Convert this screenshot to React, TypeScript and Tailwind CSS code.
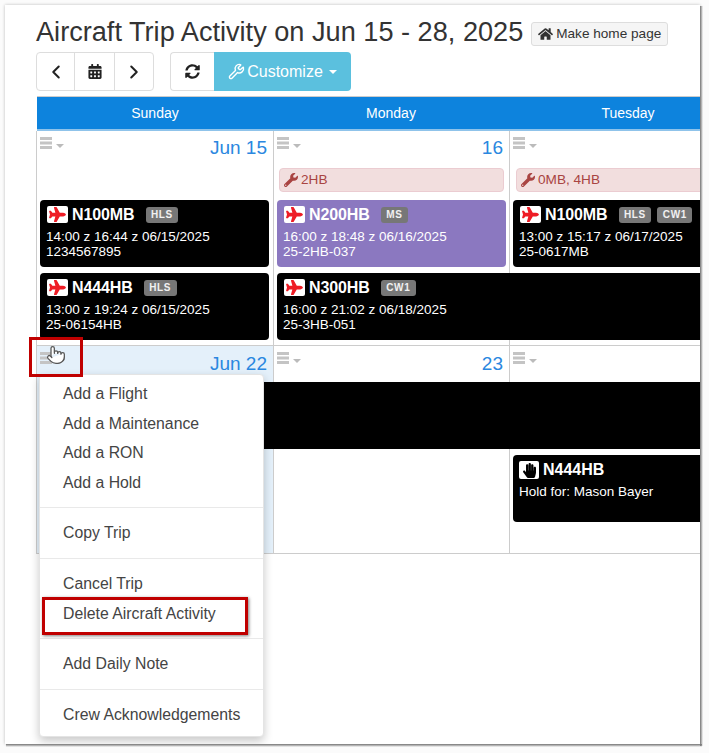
import React from "react";
import { FaCalendarAlt, FaHandPaper, FaHome, FaPlane, FaSyncAlt, FaWrench } from "react-icons/fa";
import { ChevronLeft, ChevronRight, Pointer, Wrench } from "lucide-react";

const Caret = ({ c }: { c: string }) => (
  <span className={`inline-block w-0 h-0 border-x-[4px] border-t-[4px] border-x-transparent ${c}`} />
);

const Bars = () => (
  <svg width="12" height="12" viewBox="0 0 12 12" fill="#c4c4c4">
    <rect x="0" y="0" width="12" height="3" />
    <rect x="0" y="4.5" width="12" height="3" />
    <rect x="0" y="9" width="12" height="3" />
  </svg>
);

const DayHead = ({ label, col, low = false }: { label: string; col: string; low?: boolean }) => (
  <div className={`${col} row-start-1 flex justify-between pl-[4px] pr-[6px] pt-[6px]`}>
    <span className="flex items-start">
      <Bars />
      <span className="ml-[4px] mt-[7px] flex"><Caret c="border-t-[#bbb]" /></span>
    </span>
    <span className={`text-[19px] leading-[24px] text-[#2a87e0] ${low ? "mt-0" : "-mt-[1px]"}`}>{label}</span>
  </div>
);

const Badge = ({ t }: { t: string }) => (
  <span className="h-[16px] px-[5.5px] ml-[2px] rounded-[3px] bg-[#777] text-white/90 text-[10px] font-bold tracking-[0.6px] leading-[16px]">{t}</span>
);

const Card = ({ name, badges = [], l1, l2, className = "", purple = false }: { name: string; badges?: string[]; l1: string; l2: string; className?: string; purple?: boolean }) => (
  <div className={`h-[67px] rounded-[4px] text-white pl-[6px] pt-[6px] overflow-hidden ${purple ? "bg-[#8b78c0]" : "bg-black"} ${className}`}>
    <div className="flex items-center h-[17px]">
      <span className="ml-[1px] w-[21px] h-[17px] bg-white rounded-[2px] flex items-center justify-center text-[#ee1c25]">
        <FaPlane className="w-[17px] h-[15px]" />
      </span>
      <span className="ml-[4px] mr-[9px] text-[16px] font-bold leading-[17px] tracking-[-0.1px]">{name}</span>
      <span className="flex gap-[4px]">{badges.map((b) => <Badge key={b} t={b} />)}</span>
    </div>
    <div className="mt-[6px] text-[13.5px] leading-[15px]">{l1}</div>
    <div className="text-[13.5px] leading-[15px]">{l2}</div>
  </div>
);

const Alert = ({ t, className = "" }: { t: string; className?: string }) => (
  <div className={`row-start-2 self-start h-[24px] rounded-[4px] bg-[#f2dede] border border-[#ebccd1] text-[#a94442] text-[13.6px] flex items-center pl-[4px] gap-[3px] ${className}`}>
    <FaWrench className="w-[14px] h-[14px]" />
    {t}
  </div>
);

const Item = ({ t }: { t: string }) => <div className="h-[29.6px] pl-[23px] text-[15.8px] leading-[29.6px] text-[#444]">{t}</div>;
const Divider = () => <div className="h-px bg-[#e9e9e9] my-[10px]" />;

const ColLines = () => (
  <>
    <div className="col-start-1 row-start-1 row-span-full border-l border-[#ccc]" />
    <div className="col-start-2 row-start-1 row-span-full border-l border-[#ccc]" />
    <div className="col-start-3 row-start-1 row-span-full border-l border-[#ccc]" />
  </>
);

export default function App() {
  return (
    <div className="relative w-[709px] h-[753px] overflow-hidden bg-[#fbfbfb]" style={{ fontFamily: '"Liberation Sans", Arial, sans-serif' }}>
      <div className="relative ml-[5px] mt-[5px] w-[695px] h-[739px] bg-white overflow-hidden shadow-[0_0_3px_rgba(0,0,0,0.25)]">
        <div className="pl-[31px] text-[#333]">
          <div className="flex items-center h-[47px]">
            <h1 className="text-[27.15px] leading-[32px] text-[#333] whitespace-nowrap mt-[6px]">Aircraft Trip Activity on Jun 15 - 28, 2025</h1>
            <span className="ml-[8px] mt-[11px] h-[24px] w-[137px] flex items-center justify-center gap-[3px] rounded-[3px] bg-[#f5f5f5] border border-[#ddd] text-[13.6px] whitespace-nowrap">
              <FaHome className="w-[15px] h-[14px]" />Make home page
            </span>
          </div>
          <div className="flex h-[39px] text-[#333]">
            <div className="flex w-[118px] border border-[#ddd] rounded-[4px] text-[#222]">
              <span className="w-[37px] flex items-center justify-center"><ChevronLeft className="w-[22px] h-[22px]" strokeWidth={2.2} /></span>
              <span className="w-[41px] flex items-center justify-center border-x border-[#ddd]"><FaCalendarAlt className="w-[14px] h-[15px]" /></span>
              <span className="flex-1 flex items-center justify-center"><ChevronRight className="w-[22px] h-[22px]" strokeWidth={2.2} /></span>
            </div>
            <div className="flex ml-[16px]">
              <span className="w-[44px] flex items-center justify-center border border-r-0 border-[#ddd] rounded-l-[4px] text-[#222]"><FaSyncAlt className="w-[15px] h-[15px]" /></span>
              <span className="w-[137px] flex items-center justify-center gap-[2px] bg-[#5bc0de] rounded-r-[4px] text-white text-[16px]">
                <Wrench className="w-[17px] h-[17px]" strokeWidth={2} />Customize
                <span className="ml-[4px] flex"><Caret c="border-t-white" /></span>
              </span>
            </div>
          </div>
          <div className="mt-[5px] border-t border-[#ccc] w-[664px] ml-[1px] h-[35px] bg-[#0d83dd] border-b-2 border-b-[#8fc3ea] text-white text-[14px] grid grid-cols-[236px_236px_238px] items-center text-center">
            <span>Sunday</span><span>Monday</span><span>Tuesday</span>
          </div>

          <div className="grid grid-cols-[237px_236px_236px_236px] grid-rows-[37px_32px_73px_72px] border-b border-[#ccc] w-[945px]">
            <ColLines />
            <DayHead label="Jun 15" col="col-start-1" />
            <DayHead label="16" col="col-start-2" />
            <DayHead label="" col="col-start-3" />
            <Alert t="2HB" className="col-start-2 ml-[6px] mr-[5px]" />
            <Alert t="0MB, 4HB" className="col-start-3 col-span-2 ml-[7px]" />
            <Card className="col-start-1 row-start-3 ml-[4px] mr-[4px]" name="N100MB" badges={["HLS"]} l1="14:00 z 16:44 z 06/15/2025" l2="1234567895" />
            <Card purple className="col-start-2 row-start-3 ml-[4px] mr-[3px]" name="N200HB" badges={["MS"]} l1="16:00 z 18:48 z 06/16/2025" l2="25-2HB-037" />
            <Card className="col-start-3 row-start-3 ml-[4px]" name="N100MB" badges={["HLS", "CW1"]} l1="13:00 z 15:17 z 06/17/2025" l2="25-0617MB" />
            <Card className="col-start-1 row-start-4 ml-[4px] mr-[4px]" name="N444HB" badges={["HLS"]} l1="13:00 z 19:24 z 06/15/2025" l2="25-06154HB" />
            <Card className="col-start-2 col-span-3 row-start-4 ml-[4px]" name="N300HB" badges={["CW1"]} l1="16:00 z 21:02 z 06/18/2025" l2="25-3HB-051" />
          </div>

          <div className="grid grid-cols-[237px_236px_236px_236px] grid-rows-[36px_73px_98px] border-b border-[#ccc] w-[945px]">
            <div className="col-start-1 row-start-1 row-span-full bg-[#e4f0fa]" />
            <ColLines />
            <DayHead low label="Jun 22" col="col-start-1" />
            <DayHead low label="23" col="col-start-2" />
            <DayHead low label="" col="col-start-3" />
            <div className="col-start-1 col-span-4 row-start-2 h-[67px] ml-[4px] bg-black rounded-l-[4px]" />
            <div className="col-start-3 row-start-3 ml-[4px] h-[67px] bg-black rounded-[4px] text-white pl-[6px] pt-[5px]">
              <div className="flex items-center h-[20px]">
                <span className="w-[20px] h-[18px] bg-white rounded-[2px] flex items-center justify-center text-black">
                  <FaHandPaper className="w-[13px] h-[15px]" />
                </span>
                <span className="ml-[4px] text-[16px] font-bold">N444HB</span>
              </div>
              <div className="mt-[4px] text-[13.5px] leading-[15px]">Hold for: Mason Bayer</div>
            </div>
          </div>
        </div>

        {/* dropdown menu */}
        <div className="absolute left-[34px] top-[369px] w-[225px] h-[363px] bg-white rounded-[4px] border border-[#e4e4e4] shadow-[0_4px_10px_rgba(0,0,0,0.22)] pt-[4px]">
          <Item t="Add a Flight" />
          <Item t="Add a Maintenance" />
          <Item t="Add a RON" />
          <Item t="Add a Hold" />
          <Divider />
          <Item t="Copy Trip" />
          <Divider />
          <Item t="Cancel Trip" />
          <Item t="Delete Aircraft Activity" />
          <Divider />
          <Item t="Add Daily Note" />
          <Divider />
          <Item t="Crew Acknowledgements" />
        </div>

        {/* annotations */}
        <div className="absolute left-[24px] top-[332px] w-[54px] h-[40px] border-[3px] border-[#c00000]" />
        <div className="absolute left-[37px] top-[592px] w-[206px] h-[38px] border-[3px] border-[#c00000] shadow-[1px_1px_3px_rgba(0,0,0,0.5)]" />
        <Pointer className="absolute left-[41px] top-[338px] w-[20px] h-[24px] text-[#555]" fill="#fff" strokeWidth={1.5} />
      </div>
      <div className="absolute left-[700px] top-[6px] w-[3px] h-[740px] bg-gradient-to-r from-[#777] to-transparent" />
      <div className="absolute left-[6px] top-[744px] w-[696px] h-[3px] bg-gradient-to-b from-[#777] to-transparent" />
    </div>
  );
}
